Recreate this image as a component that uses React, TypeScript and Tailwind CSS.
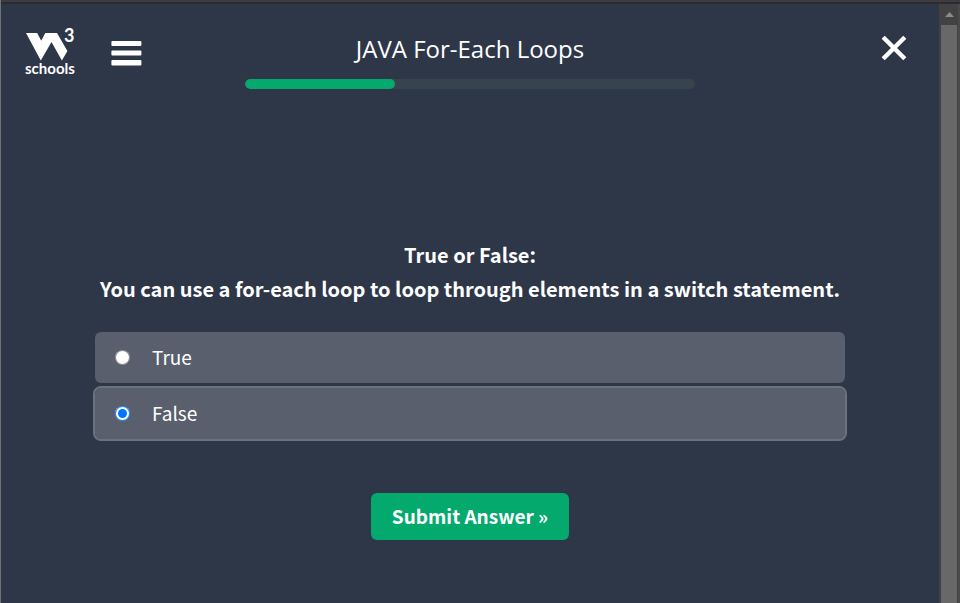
import { useState } from "react";

const answers = ["True", "False"];

function Logo() {
  return (
    <a href="#" aria-label="W3Schools home" className="block">
      <svg width="56" height="56" viewBox="0 -6 56 56" fill="#fff">
        <path d="M1 6H12.2L16.2 13.8L20.3 6H32L42.4 24L36.9 33.5L26.5 15L15.8 33.5Z" />
        <text x="39" y="15" fontSize="18" fontWeight="700" fontFamily="Lato, sans-serif">
          3
        </text>
        <text x="0" y="47" fontSize="15" fontWeight="700" fontFamily="Lato, sans-serif">
          schools
        </text>
      </svg>
    </a>
  );
}

function Header() {
  return (
    <header className="grid grid-cols-[1fr_48%_1fr] items-start pt-[17px]">
      <div className="flex items-start pl-6">
        <Logo />
        <button type="button" aria-label="Menu" className="ml-7 mt-4">
          <svg width="34" height="32" viewBox="0 0 34 32" fill="#fff">
            <rect x="2.4" y="4" width="30" height="5" rx="1" />
            <rect x="2.4" y="13.4" width="30" height="5.2" rx="1" />
            <rect x="2.4" y="23" width="30" height="5.4" rx="1" />
          </svg>
        </button>
      </div>
      <div className="pt-2.5">
        <h1 className="text-center font-['Open_Sans',sans-serif] text-2xl leading-9">
          JAVA For-Each Loops
        </h1>
        <div
          role="progressbar"
          aria-label="Quiz progress"
          aria-valuenow={33}
          className="mt-3 h-2.5 overflow-hidden rounded-full bg-[#38444d]"
        >
          <div className="h-full w-1/3 rounded-full bg-[#04aa6d]" />
        </div>
      </div>
      <div className="flex justify-end pr-8 pt-3.5">
        <button type="button" aria-label="Close">
          <svg width="26" height="26" viewBox="0 0 26 26" stroke="#fff" strokeWidth="4.4" strokeLinecap="butt">
            <path d="M2.2 2.2L23.8 23.8M23.8 2.2L2.2 23.8" />
          </svg>
        </button>
      </div>
    </header>
  );
}

function Scrollbar() {
  return (
    <div aria-hidden="true" className="flex w-[21px] flex-col border-r-2 border-[#4a4a4d] bg-[#424242] pl-0.5">
      <div className="flex h-[21px] items-center justify-center">
        <svg width="9" height="5" viewBox="0 0 9 5" fill="#8b8b8b">
          <path d="M0 5L4.5 0L9 5Z" />
        </svg>
      </div>
      <div className="mr-px flex-1 bg-[#686868]" />
    </div>
  );
}

export default function App() {
  const [choice, setChoice] = useState("False");
  return (
    <div className="flex min-h-screen flex-col border-l border-[#727272] bg-[#2e3748] font-['Noto_Sans_CJK_SC',sans-serif] text-white">
      <div className="h-1 border-t-2 border-[#3d3c41] bg-[#2d2b30]" />
      <div className="flex flex-1">
        <div className="flex-1">
          <Header />
          <main className="mx-auto w-full max-w-[754px] pt-[149px]">
            <form onSubmit={(event) => event.preventDefault()}>
              <fieldset>
                <legend className="w-full text-center text-xl leading-[34px] font-semibold">
                  True or False:
                  <br />
                  You can use a for-each loop to loop through elements in a switch statement.
                </legend>
                <div className="flex flex-col gap-px pt-6">
                  {answers.map((answer) => (
                    <label
                      key={answer}
                      className="flex h-[55px] items-center rounded-lg border-2 border-transparent bg-[#595f6c] bg-clip-padding pl-5 text-[19px] has-checked:border-[#6b737d]"
                    >
                      <input
                        type="radio"
                        name="answer"
                        value={answer}
                        checked={choice === answer}
                        onChange={() => setChoice(answer)}
                        className="mr-[22px] size-[15px] accent-[#0075ff]"
                      />
                      {answer}
                    </label>
                  ))}
                </div>
              </fieldset>
              <div className="flex justify-center pt-[52px]">
                <button type="submit" className="h-[47px] rounded-md bg-[#04aa6d] px-[21px] text-[19px] font-bold">
                  Submit Answer »
                </button>
              </div>
            </form>
          </main>
        </div>
        <Scrollbar />
      </div>
    </div>
  );
}
